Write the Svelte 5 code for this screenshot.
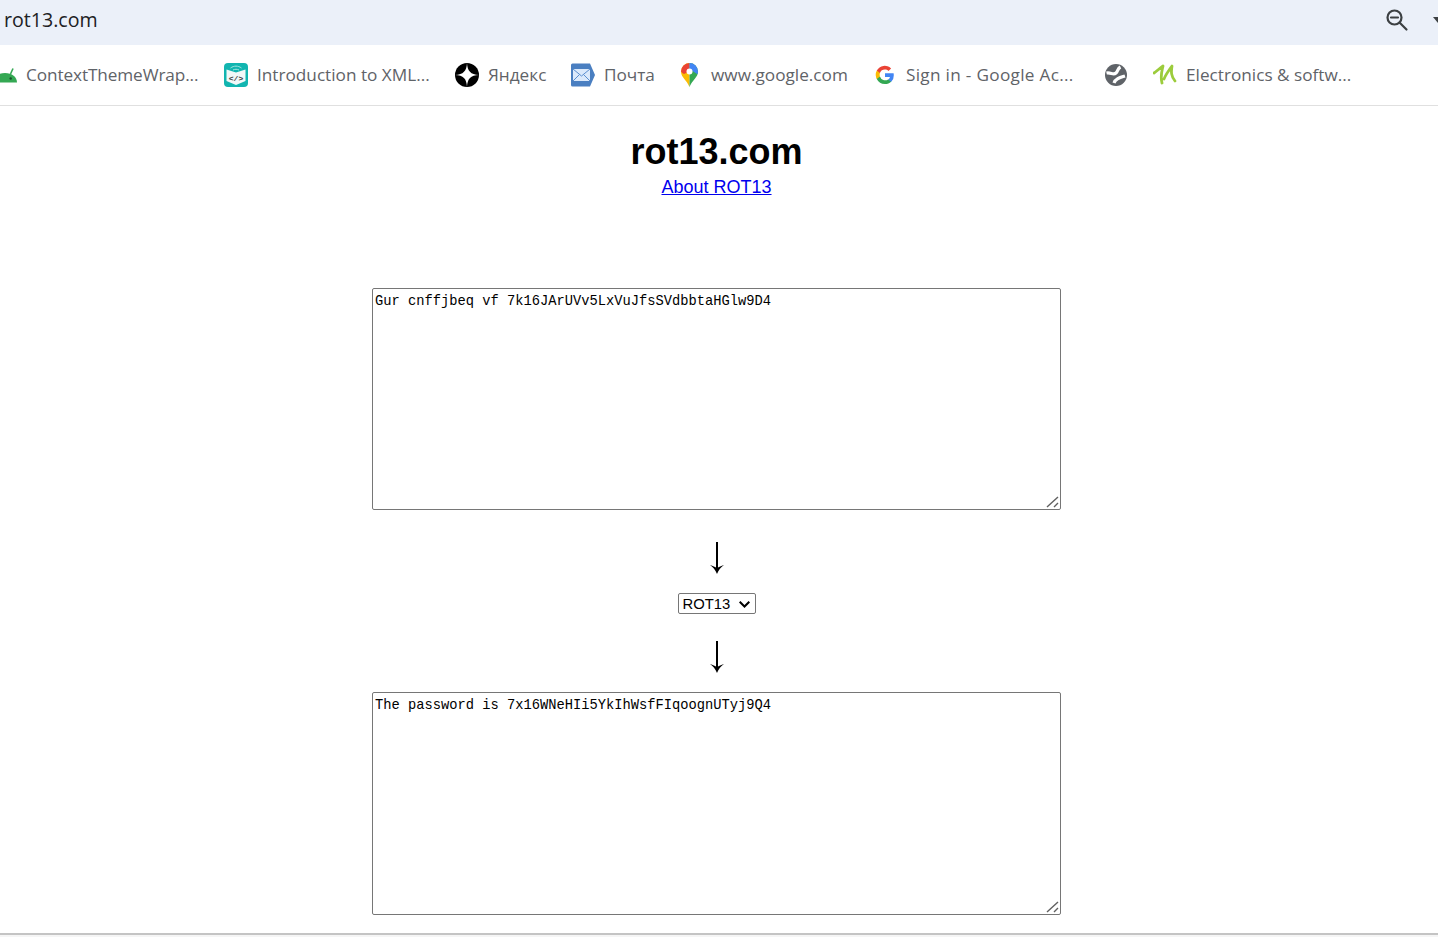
<script lang="ts">
  const bookmarks = [
    { icon: 'android', label: 'ContextThemeWrap...', width: 173, track: -0.1 },
    { icon: 'xml', label: 'Introduction to XML...', width: 173, track: 0 },
    { icon: 'yandex', label: 'Яндекс', width: 58, track: 0 },
    { icon: 'mail', label: 'Почта', width: 49, track: 0 },
    { icon: 'maps', label: 'www.google.com', width: 137, track: 0 },
    { icon: 'google', label: 'Sign in - Google Ac...', width: 173, track: 0.3 },
    { icon: 'globe', label: '', width: 0, track: 0 },
    { icon: 'leaf', label: 'Electronics & softw...', width: 170, track: 0 }
  ];

  let input = $state('Gur cnffjbeq vf 7k16JArUVv5LxVuJfsSVdbbtaHGlw9D4');
  let output = $state('The password is 7x16WNeHIi5YkIhWsfFIqoognUTyj9Q4');
</script>

{#snippet arrow()}
  <svg class="arrow" width="14" height="32" viewBox="0 0 14 32">
    <path d="M6 0h2v26H6z" fill="#000" />
    <path d="M0 23c3 1 5 2 7 3 2-1 4-2 7-3-3 2-5.500 5-7 9-1.500-4-4-7-7-9z" fill="#000" />
  </svg>
{/snippet}

{#snippet grip()}
  <svg class="grip" width="14" height="14" viewBox="0 0 14 14" fill="none" stroke="#606060" stroke-width="1.400">
    <path d="M2 13L13 3M9 13l4-4" />
  </svg>
{/snippet}

<header class="tabbar">
  <span class="title">rot13.com</span>
  <svg class="zoom" width="24" height="24" viewBox="0 0 24 24" fill="none" stroke="#3c4043" stroke-width="2.200">
    <circle cx="9.500" cy="9.500" r="7" />
    <path d="M6 9.500h7M14.500 14.500l7 7" stroke-linecap="round" />
  </svg>
  <svg class="caret" width="10" height="8" viewBox="0 0 10 8"><path d="M0 1h10L5 7z" fill="#3c4043" /></svg>
</header>

<nav class="bookmarks">
  {#each bookmarks as b}
    <div class="bookmark">
      <svg class="icon" width="24" height="24" viewBox="0 0 24 24">
        {#if b.icon === 'android'}
          <path d="M0 19.500c0-5.500 5-9.500 12-9.500s12 4 12 9.500z" fill="#34a853" />
          <path d="M17.500 11l2.500-5.500" stroke="#34a853" stroke-width="1.600" />
          <circle cx="17.700" cy="15.500" r="1.200" fill="#1c4f2c" />
        {:else if b.icon === 'xml'}
          <rect width="24" height="24" rx="4" fill="#12b5b0" />
          <path d="M2.500 6.500l9.500 3 9.500-3v11.500l-9.500 4-9.500-4z" fill="#f2f8f8" />
          <path d="M6.500 5c3.500-2.500 7.500-2.500 11 0M9 7c2-1 4-1 6 0" stroke="#a6e4e0" fill="none" />
          <text x="12" y="18" text-anchor="middle" class="xmltext">&lt;/&gt;</text>
        {:else if b.icon === 'yandex'}
          <circle cx="12" cy="12" r="12" fill="#000" />
          <path d="M12 0c.4 8 3.600 11.600 12 12-8.400.4-11.600 3.600-12 12-.4-8.400-3.600-11.600-12-12 8.400-.4 11.600-4 12-12z" fill="#fff" />
        {:else if b.icon === 'mail'}
          <path d="M0 2a1.500 1.500 0 0 1 1.500-1.500H19L24 12l-5 11.500H1.500A1.500 1.500 0 0 1 0 22z" fill="#4a7fc1" />
          <rect x="2" y="6" width="17" height="12" fill="#dbe9fb" />
          <path d="M2 6l8.500 7L19 6M2 18l6.500-6.500M19 18l-6.500-6.500" stroke="#5b8fd0" fill="none" />
        {:else if b.icon === 'maps'}
          <path d="M11.500 0a8.500 8.500 0 0 0-8.500 8.500c0 6 5.500 8 8.500 15.500z" fill="#fbbc04" />
          <path d="M11.500 0A8.500 8.500 0 0 1 20 8.500c0 6-5.500 8-8.500 15.500z" fill="#34a853" />
          <path d="M5.500 2.500A8.500 8.500 0 0 1 11.500 0v8.500L6 11a8.500 8.500 0 0 1-3-2.500 8.500 8.500 0 0 1 2.500-6z" fill="#ea4335" />
          <path d="M11.500 0A8.500 8.500 0 0 1 20 8.500c0 1-.2 2-.5 2.800L11.500 6z" fill="#4285f4" />
          <circle cx="11.500" cy="8.500" r="3" fill="#fff" />
        {:else if b.icon === 'google'}
          <path d="M20.800 12.200c0-.7-.1-1.300-.2-1.900H12v3.600h5a4.300 4.300 0 0 1-1.900 2.800v2.300h3a9 9 0 0 0 2.700-6.800z" fill="#4285f4" />
          <path d="M12 21c2.500 0 4.500-.8 6.100-2.300l-3-2.300a5.500 5.500 0 0 1-8.200-2.900H3.800v2.400A9 9 0 0 0 12 21z" fill="#34a853" />
          <path d="M6.900 13.500a5.400 5.400 0 0 1 0-3.500V7.600H3.800a9 9 0 0 0 0 8.300z" fill="#fbbc04" />
          <path d="M12 6.600c1.300 0 2.500.5 3.500 1.400l2.600-2.600A9 9 0 0 0 3.800 7.600L6.900 10A5.400 5.400 0 0 1 12 6.600z" fill="#ea4335" />
        {:else if b.icon === 'globe'}
          <circle cx="12" cy="12" r="11" fill="#5f6368" />
          <path d="M2.500 10C7 9 9 12.500 12 10c2-1.700 1.500-4.500 4.500-6M10 20c1.500-4.500 6-5.500 11-7" fill="none" stroke="#fff" stroke-width="3.200" />
        {:else if b.icon === 'leaf'}
          <path d="M1 10c3-2 6-5 9-7-1 5-3 10-1 17M11 16c2-5 5-9 8-13-1 6-1 10 3 15" fill="none" stroke="#9ccc3c" stroke-width="2.800" stroke-linecap="round" stroke-linejoin="round" />
        {/if}
      </svg>
      {#if b.label}<span class="label" style:width="{b.width}px" style:letter-spacing="{b.track}px">{b.label}</span>{/if}
    </div>
  {/each}
</nav>

<main>
  <h1>rot13.com</h1>
  <a href="#about">About ROT13</a>
  <div class="field first">
    <textarea class="box" bind:value={input} spellcheck="false"></textarea>
    {@render grip()}
  </div>
  {@render arrow()}
  <div class="select-wrap">
    <select>
      <option>ROT13</option>
    </select>
    <svg class="chevron" width="11" height="7" viewBox="0 0 11 7" fill="none" stroke="#000" stroke-width="2">
      <path d="M.7.700l4.800 4.800L10.300.7" />
    </svg>
  </div>
  {@render arrow()}
  <div class="field second">
    <textarea class="box tall" bind:value={output} spellcheck="false"></textarea>
    {@render grip()}
  </div>
</main>
<div class="footer-line"></div>

<style>
  :global(body) {
    margin: 0;
    overflow: hidden;
    background: #fff;
    font-family: 'Liberation Sans', Arial, sans-serif;
  }
  .tabbar {
    box-sizing: border-box;
    height: 45px;
    background: #ebf0f9;
    display: flex;
    align-items: center;
    padding: 0 0 6px 4px;
    overflow: hidden;
    font-family: 'Open Sans', sans-serif;
  }
  .title {
    font-size: 19.600px;
    color: #202124;
    flex: 1;
  }
  .zoom {
    margin-right: 24px;
  }
  .caret {
    margin-right: -5px;
  }
  .bookmarks {
    box-sizing: border-box;
    height: 61px;
    border-bottom: 1px solid #e0e0e0;
    display: flex;
    align-items: center;
    gap: 25px;
    margin-left: -7px;
    font-family: 'Open Sans', sans-serif;
  }
  .bookmark {
    display: flex;
    align-items: center;
    gap: 9px;
  }
  .label {
    font-size: 17.200px;
    margin-bottom: 2px;
    color: #5f6368;
    white-space: nowrap;
  }
  .xmltext {
    font-size: 8px;
    font-weight: 700;
    fill: #3c4043;
    font-family: 'Liberation Mono', monospace;
  }
  main {
    width: 1433px;
    display: flex;
    flex-direction: column;
    align-items: center;
  }
  h1 {
    margin: 25px 0 0;
    font-size: 36px;
    line-height: 42px;
    font-weight: 700;
    color: #000;
  }
  a {
    font-size: 18px;
    line-height: 21px;
    margin-top: 4px;
    color: #0000ee;
  }
  .field {
    position: relative;
  }
  .first {
    margin-top: 90px;
  }
  .second {
    margin-top: 19px;
  }
  .box {
    display: block;
    box-sizing: border-box;
    width: 689px;
    height: 222px;
    margin: 0;
    padding: 5px 2px 2px;
    border: 1px solid #767676;
    border-radius: 2px;
    font-family: 'Liberation Mono', monospace;
    font-size: 13.750px;
    color: #000;
    outline: none;
  }
  .box::-webkit-resizer {
    background: transparent;
  }
  .tall {
    height: 223px;
  }
  .grip {
    position: absolute;
    right: 2px;
    bottom: 2px;
    pointer-events: none;
  }
  .arrow {
    display: block;
    margin-top: 32px;
  }
  .select-wrap {
    position: relative;
    margin: 19px 0 -5px;
  }
  select {
    display: block;
    box-sizing: border-box;
    appearance: none;
    width: 78px;
    height: 21px;
    padding: 0 0 0 4px;
    border: 1px solid #767676;
    border-radius: 2px;
    font-family: 'Liberation Sans', Arial, sans-serif;
    font-size: 14.800px;
    color: #000;
    background: #fff;
  }
  .chevron {
    position: absolute;
    right: 6px;
    top: 8px;
    pointer-events: none;
  }
  .footer-line {
    position: fixed;
    left: 0;
    right: 0;
    bottom: 0;
    height: 2px;
    border-top: 2px solid #c4c4c4;
    background: #f5f5f5;
  }
</style>
